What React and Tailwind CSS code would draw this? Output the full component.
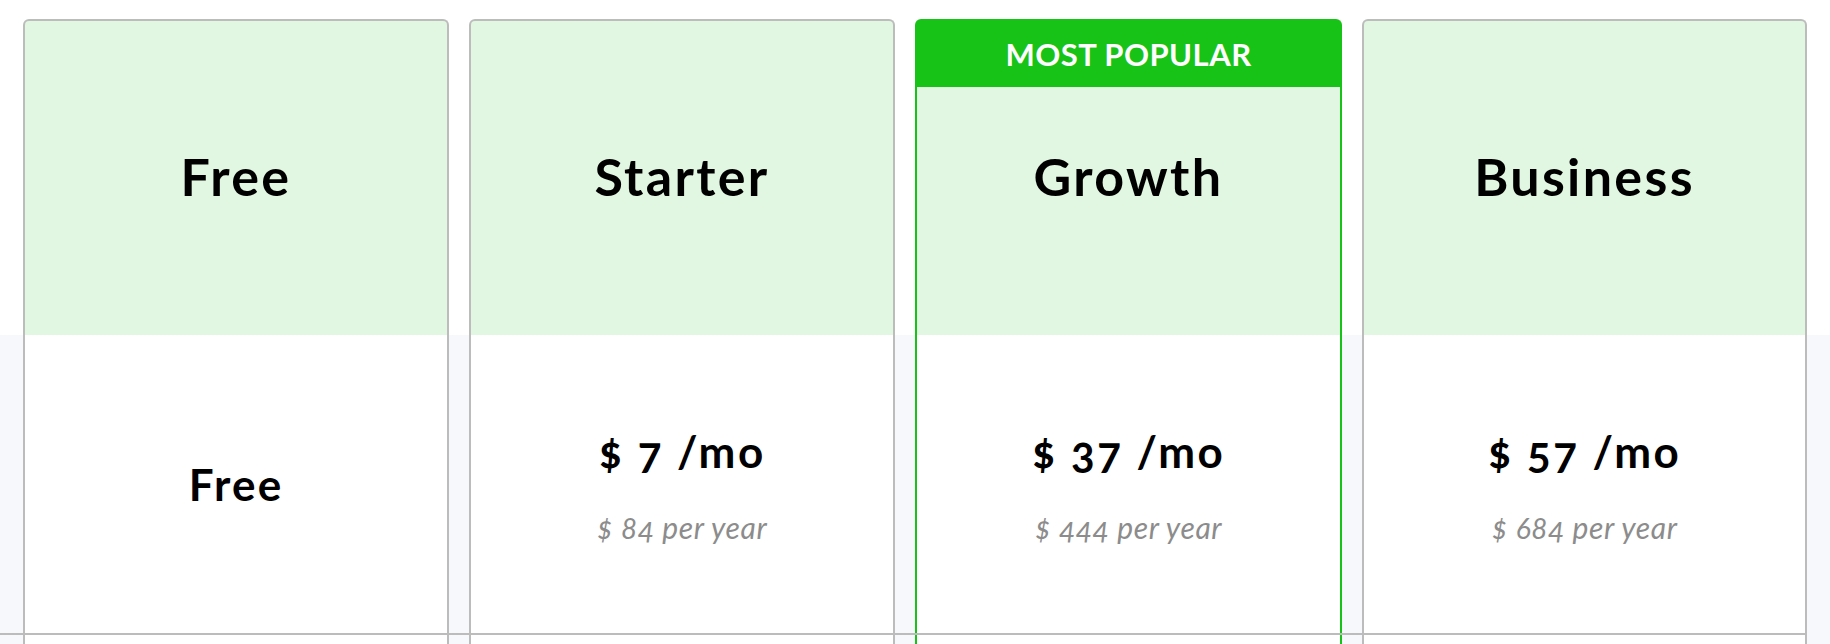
import React from 'react'

const plans = [
  { name: 'Free', price: null },
  { name: 'Starter', price: 7, year: 84 },
  { name: 'Growth', price: 37, year: 444, popular: true },
  { name: 'Business', price: 57, year: 684 },
]

const cols = 'grid grid-cols-[426px_426px_427px_1fr] gap-x-5 pl-[23px] pr-[23px]'

const edge = (plan) => (plan.popular ? 'border-[#17c317]' : 'border-[#bcbcbc]')

const App = () => {
  return (
    <div className="min-h-[644px] bg-[#f7f8fc] font-[Lato,'Open_Sans',sans-serif] text-black">
      <div className={`${cols} bg-white pt-[19px]`}>
        {plans.map((plan) => (
          <div
            key={plan.name}
            className={`relative h-[316px] flex items-center justify-center bg-[#e1f7e2] border-x-2 border-t-2 rounded-t-[6px] ${edge(plan)}`}
          >
            {plan.popular && (
              <div className="absolute inset-x-0 top-0 h-[66px] flex items-center justify-center bg-[#17c317] text-white text-[31px] font-bold tracking-[0.015em]">
                MOST POPULAR
              </div>
            )}
            <h2 className="mb-[4px] text-[52px] font-bold leading-none tracking-[0.045em]">{plan.name}</h2>
          </div>
        ))}
      </div>

      <div className={cols}>
        {plans.map((plan) => (
          <div
            key={plan.name}
            className={`h-[298px] flex flex-col items-center justify-center bg-white border-x-2 ${edge(plan)} ${plan.price === null ? '' : 'pt-[6px]'}`}
          >
            {plan.price === null ? (
              <div className="text-[44px] font-bold tracking-[0.05em]">Free</div>
            ) : (
              <>
                <div className="text-[44px] font-bold leading-tight tracking-[0.055em] oldstyle-nums">
                  $ {plan.price} /mo
                </div>
                <div className="mt-[26px] text-[30px] italic tracking-[0.02em] text-[#8c8c8c] oldstyle-nums">
                  $ {plan.year} per year
                </div>
              </>
            )}
          </div>
        ))}
      </div>

      <div className="mr-[23px] border-t-2 border-[#bcbcbc]">
        <div className="grid grid-cols-[426px_426px_427px_1fr] gap-x-5 pl-[23px]">
          {plans.map((plan) => (
            <div key={plan.name} className={`h-[20px] bg-white border-x-2 ${edge(plan)}`} />
          ))}
        </div>
      </div>
    </div>
  )
}

export default App
